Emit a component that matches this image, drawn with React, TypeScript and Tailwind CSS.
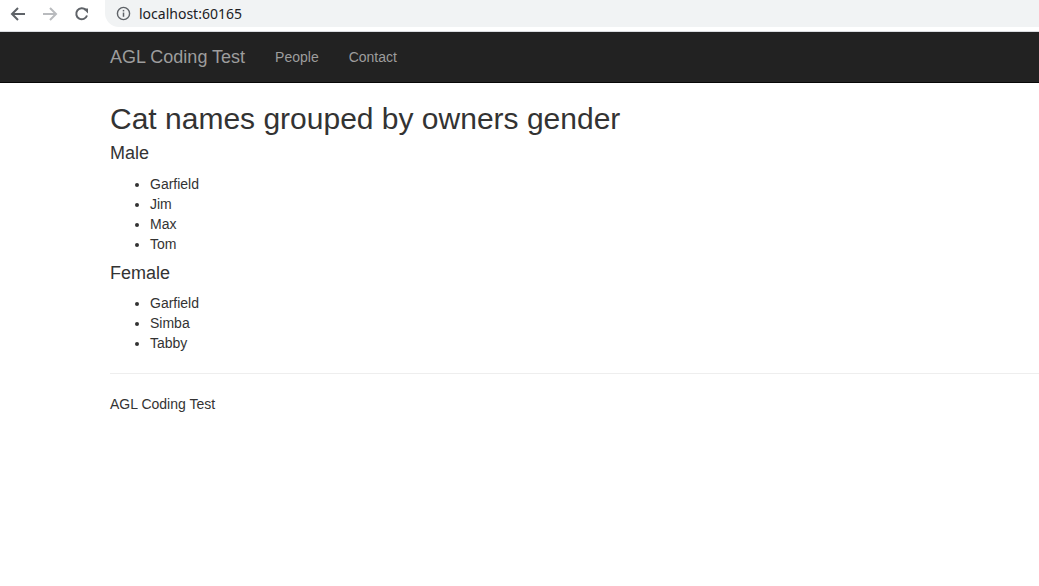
import React from "react";

const font = { fontFamily: '"Liberation Sans", Arial, sans-serif' };

function Chrome() {
  return (
    <div className="h-[32px] bg-white border-b border-[#dadce0] flex items-start">
      <div className="flex items-center h-[27px] w-[105px] shrink-0">
        <svg className="ml-[10px]" width="16" height="16" viewBox="0 0 16 16">
          <path d="M15 8H2.5M8 2L2 8l6 6" fill="none" stroke="#5f6368" strokeWidth="2" />
        </svg>
        <svg className="ml-[16px]" width="16" height="16" viewBox="0 0 16 16">
          <path d="M1 8h12.5M8 2l6 6-6 6" fill="none" stroke="#b9bbbe" strokeWidth="2" />
        </svg>
        <svg className="ml-[16px]" width="16" height="16" viewBox="0 0 16 16">
          <path d="M13 9.5A5.5 5.5 0 1 1 11.8 4" fill="none" stroke="#5f6368" strokeWidth="2" />
          <path d="M9 2.5h5v5z" fill="#5f6368" />
        </svg>
      </div>
      <div className="flex-1 h-[27px] bg-[#f1f3f4] rounded-bl-[14px] flex items-center">
        <svg className="ml-[11px]" width="15" height="15" viewBox="0 0 16 16">
          <circle cx="8" cy="8" r="6.5" fill="none" stroke="#5f6368" strokeWidth="1.5" />
          <rect x="7.2" y="7" width="1.6" height="4.5" fill="#5f6368" />
          <rect x="7.2" y="4.2" width="1.6" height="1.6" fill="#5f6368" />
        </svg>
        <span className="ml-[8px] text-[14px] text-[#202124]" style={{ fontFamily: '"Noto Sans", Arial, sans-serif' }}>
          localhost:60165
        </span>
      </div>
    </div>
  );
}

export default function App() {
  return (
    <div className="min-h-[586px] bg-white text-[14px] leading-[20px] text-[#333]" style={font}>
      <Chrome />
      <nav className="h-[51px] bg-[#222] border-b border-[#080808] flex items-stretch pl-[95px]">
        <span className="px-[15px] text-[18px] leading-[20px] py-[15px] text-[#9d9d9d]">AGL Coding Test</span>
        <span className="px-[15px] py-[15px] text-[#9d9d9d]">People</span>
        <span className="px-[15px] py-[15px] text-[#9d9d9d]">Contact</span>
      </nav>
      <div className="pl-[110px]">
        <h2 className="text-[30px] leading-[33px] mt-[19px] mb-[8px] font-normal">Cat names grouped by owners gender</h2>
        <h4 className="text-[18px] leading-[20px] mb-[11px] font-normal">Male</h4>
        <ul className="list-disc pl-[40px] mb-[9px]">
          <li>Garfield</li>
          <li>Jim</li>
          <li>Max</li>
          <li>Tom</li>
        </ul>
        <h4 className="text-[18px] leading-[20px] mb-[10px] font-normal">Female</h4>
        <ul className="list-disc pl-[40px]">
          <li>Garfield</li>
          <li>Simba</li>
          <li>Tabby</li>
        </ul>
        <hr className="mt-[20px] mb-[20px] border-0 border-t border-[#eee]" />
        <p>AGL Coding Test</p>
      </div>
    </div>
  );
}
